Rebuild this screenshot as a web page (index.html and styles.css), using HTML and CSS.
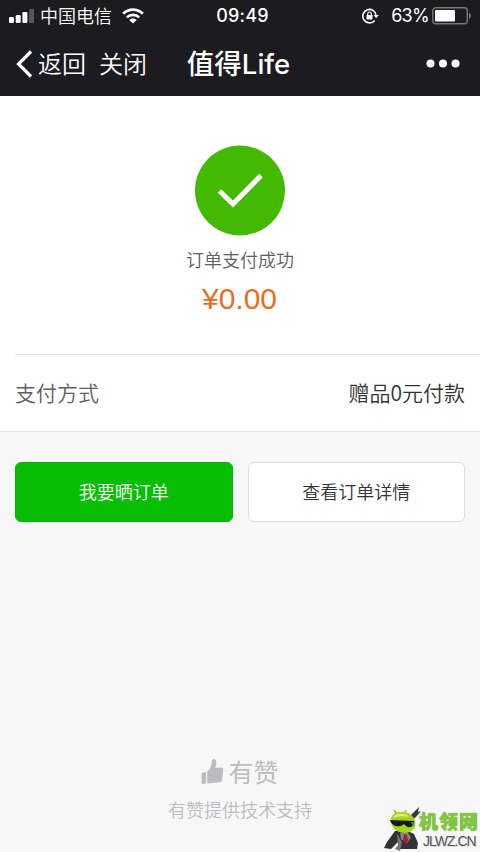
FILE: index.html
```html
<!DOCTYPE html>
<html lang="zh-CN">
<head>
<meta charset="utf-8">
<title>值得Life</title>
<link rel="stylesheet" href="styles.css">
</head>
<body>
<header class="top">
  <div class="status">
    <div class="status-left">
      <svg class="signal" width="25" height="16" viewBox="0 0 25 16"><g fill="#fff"><rect x="0" y="9" width="5" height="6" rx="1.2"/><rect x="6.7" y="7" width="5" height="8" rx="1.2"/><rect x="13.4" y="4" width="5" height="11" rx="1.2"/></g><rect x="20" y="1" width="5" height="14" rx="1.2" fill="#56565a"/></svg>
      <span class="carrier">中国电信</span>
      <svg class="wifi" width="22" height="16" viewBox="0 0 22 16"><g fill="none" stroke="#fff" stroke-width="2.7"><path d="M1.2 5.7C6.8.2 15.2.2 20.8 5.7"/><path d="M4.8 9.4c3.5-3.4 8.9-3.4 12.4 0"/></g><path d="M7.3 12c2.2-2 5.2-2 7.4 0L11 15.6z" fill="#fff"/></svg>
    </div>
    <span class="clock">09:49</span>
    <div class="status-right">
      <svg class="lock" width="17" height="16" viewBox="0 0 17 16"><path d="M12.7 12.4A6.7 6.7 0 1 1 14.2 7.8" fill="none" stroke="#fff" stroke-width="1.6"/><path d="M11.6 7h5.2l-2.6 3.3z" fill="#fff"/><rect x="4.5" y="7" width="6" height="4.4" rx=".6" fill="#fff"/><path d="M5.7 7.2V5.8a1.8 1.8 0 0 1 3.6 0v1.4" fill="none" stroke="#fff" stroke-width="1.1"/></svg>
      <span class="percent">63%</span>
      <svg class="battery" width="40" height="18" viewBox="0 0 40 18"><rect x=".8" y=".8" width="34.5" height="16" rx="3" fill="none" stroke="#77777b" stroke-width="1.4"/><rect x="3" y="3" width="20" height="11.5" rx="1" fill="#fff"/><path d="M37 6c2.6.7 2.6 5 0 5.7z" fill="#77777b"/></svg>
    </div>
  </div>
  <nav class="nav">
    <div class="nav-left">
      <svg class="back" width="17" height="28" viewBox="0 0 17 28"><path d="M15 1.500 2.500 14 15 26.500" fill="none" stroke="#fff" stroke-width="3.200"/></svg>
      <span>返回</span><span class="close">关闭</span>
    </div>
    <h1 class="title">值得Life</h1>
    <svg class="more" width="34" height="10" viewBox="0 0 34 10" fill="#fff"><circle cx="4.500" cy="4.500" r="4"/><circle cx="17" cy="4.500" r="4"/><circle cx="29.500" cy="4.500" r="4"/></svg>
  </nav>
</header>
<main>
  <section class="result">
    <svg class="check" width="90" height="91" viewBox="0 0 90 91"><circle cx="45" cy="45.500" r="45" fill="#44b902"/><path d="M24.500 46 38 59 66 30.500" fill="none" stroke="#fff" stroke-width="5"/></svg>
    <p class="message">订单支付成功</p>
    <p class="amount">¥0.00</p>
  </section>
  <section class="method"><div class="method-row"><span class="label">支付方式</span><span>赠品0元付款</span></div></section>
  <div class="actions">
    <button class="btn primary">我要晒订单</button>
    <button class="btn">查看订单详情</button>
  </div>
</main>
<footer class="footer">
  <div class="brand">
    <svg width="23" height="27" viewBox="0 0 23 27" fill="#bcbcc0"><path d="M.7 14.800 5 14v11.500l-3.300.6q-1 0-1-1z"/><path d="M6.200 13.500C10 11 10.500 7 11 2.500c.3-2.600 4.400-2 4.300 1.300 0 2.200-.3 4-1 6.200l5.700-.5c1.700 0 2.300 1 2.200 2.500l-1 9.800c-.2 1.500-1 2.200-2.500 2.400L6.200 25.500z"/></svg>
    <span>有赞</span>
  </div>
  <p class="support">有赞提供技术支持</p>
</footer>
<div class="watermark">
  <svg width="42" height="45" viewBox="0 0 42 45">
    <path d="m25 11 6-6 4-4-1 5 3-1-5 6-5 4z" fill="#383838"/>
    <path d="M11 25 3 36l-3 6 7 1 7-7 2 7h17l1-6-4-9-8-4z" fill="#333"/>
    <path d="m16 27 7-1 4 5-4 6-6-4z" fill="#858585"/><path d="m20 28 3 1 1 6-3 3-2-4z" fill="#a51d43"/>
    <path d="m13 28 5 8-2 9-5-2 3-4z" fill="#777"/>
    <path d="m10 4 3 4m9-4-2 4" stroke="#a2bd31" stroke-width="1.500"/>
    <path d="M7 17C6 8 12 5 19 6c9 0 14 8 12 15-4 9-21 8-24-4z" fill="#a5d51b"/>
    <path d="M10 10c5-4 12-3 15 1-5-1-10-1-15 1z" fill="#d7ef78"/>
    <path d="m6 14 24 1c1 7-7 8-10 3-4 4-12 3-14-4z" fill="#151c20"/><path d="m27 16 3 0-1 4" fill="#2793b8"/>
  </svg>
  <div class="wm-text"><span class="wm-cn">机领网</span><span class="wm-url">JLWZ.CN</span></div>
</div>
</body>
</html>
```
FILE: styles.css
```css
* { box-sizing: border-box; }
body {
  margin: 0;
  width: 480px;
  height: 852px;
  overflow: hidden;
  position: relative;
  display: flex;
  flex-direction: column;
  background: #f7f7f7;
  color: #333;
  font-family: "Liberation Sans", "Noto Sans CJK SC", sans-serif;
}
p, h1 { margin: 0; }
svg { display: block; flex: none; }
.top { height: 96px; background: #1c1b20; color: #fff; }
.status {
  height: 32px;
  padding: 0 8px 0 9px;
  display: grid;
  grid-template-columns: 1fr auto 1fr;
  align-items: center;
}
.status-left, .status-right { display: flex; align-items: center; }
.status-left svg { margin-bottom: 1px; }
.status-right { justify-content: flex-end; }
.carrier { margin: 0 10px 2px 6px; font: 350 18px/30px "Noto Sans CJK SC", sans-serif; }
.clock { font: 500 18px/32px Inter, sans-serif; letter-spacing: .2px; margin-left: 4px; }
.percent { margin: 0 3px 0 12px; font: 400 18px/32px Inter, sans-serif; letter-spacing: -.7px; }
.nav {
  height: 64px;
  padding: 0 20px 0 16px;
  display: grid;
  grid-template-columns: 1fr auto 1fr;
  align-items: center;
}
.nav-left { display: flex; align-items: center; font: 350 24px/62px "Noto Sans CJK SC", sans-serif; }
.nav-left span { padding-bottom: 2px; }
.back { margin-right: 5px; }
.close { margin-left: 13px; }
.title { font: 500 27.500px/62px Inter, "Noto Sans CJK SC", sans-serif; margin-left: 1px; }
.more { justify-self: end; }
.result {
  height: 258px;
  padding-top: 49px;
  background: #fff;
  display: flex;
  flex-direction: column;
  align-items: center;
}
.message { margin-top: 9px; font: 350 18px/28px "Noto Sans CJK SC", sans-serif; color: #606060; }
.amount { margin: 8px 1px 0 0; font-size: 30px; line-height: 36px; color: #e4701e; }
.method {
  height: 78px;
  padding-left: 15px;
  border-bottom: 1px solid #e5e5e5;
  background: #fff;
}
.method-row {
  padding-right: 15px;
  border-top: 1px solid #e5e5e5;
  display: flex;
  justify-content: space-between;
  font: 350 21px/74px "Noto Sans CJK SC", sans-serif;
}
.label { color: #606060; }
.actions { padding: 30px 15px; display: grid; grid-template-columns: 1fr 1fr; gap: 15px; }
.btn {
  height: 60px;
  padding: 0 0 2px;
  border: 1px solid #ddd;
  border-radius: 6px;
  background: #fff;
  color: #333;
  font: 350 18px/56px "Noto Sans CJK SC", sans-serif;
}
.primary { background: #06bf04; border-color: #09b209; color: #fff; }
.footer { margin-top: auto; height: 99px; display: flex; flex-direction: column; align-items: center; color: #bcbcc0; }
.brand { display: flex; align-items: center; gap: 4px; font: 400 25px/36px "Noto Sans CJK SC", sans-serif; }
.support { margin-top: 6px; font: 350 18px/28px "Noto Sans CJK SC", sans-serif; }
.watermark { position: absolute; left: 384px; top: 806px; display: flex; }
.wm-text { width: 62px; margin-left: -7px; padding-top: 4px; display: flex; flex-direction: column; }
.wm-cn {
  font: 900 19px/22px "Noto Sans CJK SC", sans-serif;
  letter-spacing: 1px;
  color: #82c83c;
  white-space: nowrap;
  text-shadow: 0 0 1px #568f30;
}
.wm-url {
  margin: 1px 0 0 4px;
  font: 14px/16px "Liberation Sans", sans-serif;
  letter-spacing: -1px;
  color: #555;
  text-shadow: 1px 1px #ddd;
}
```
